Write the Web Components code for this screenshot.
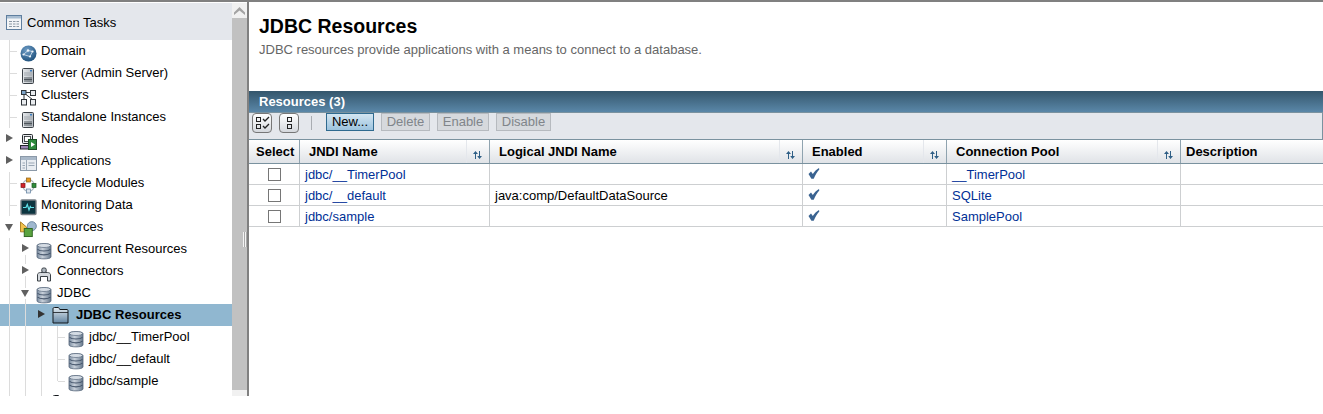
<!DOCTYPE html>
<html>
<head>
<meta charset="utf-8">
<title>JDBC Resources</title>
<style>
    html, body { margin: 0; background: #fff; font-family: "Liberation Sans", Arial, sans-serif; }
</style>
</head>
<body>
<console-shell>
    <nav-tree slot="nav">
        <tree-node cells="t" icon="domain">Domain</tree-node>
        <tree-node cells="t" icon="server">server (Admin Server)</tree-node>
        <tree-node cells="t" icon="cluster">Clusters</tree-node>
        <tree-node cells="t" icon="server">Standalone Instances</tree-node>
        <tree-node cells="r" icon="nodes">Nodes</tree-node>
        <tree-node cells="r" icon="apps">Applications</tree-node>
        <tree-node cells="t" icon="lifecycle">Lifecycle Modules</tree-node>
        <tree-node cells="t" icon="monitor">Monitoring Data</tree-node>
        <tree-node cells="d" icon="resources">Resources</tree-node>
        <tree-node cells="l B" icon="db">Concurrent Resources</tree-node>
        <tree-node cells="l R" icon="connector">Connectors</tree-node>
        <tree-node cells="l D" icon="db">JDBC</tree-node>
        <tree-node cells="l l r" icon="folder" selected>JDBC Resources</tree-node>
        <tree-node cells="l l l t" icon="db">jdbc/__TimerPool</tree-node>
        <tree-node cells="l l l t" icon="db">jdbc/__default</tree-node>
        <tree-node cells="l l l e" icon="db">jdbc/sample</tree-node>
        <tree-node cells="l l l" icon="folder"></tree-node>
    </nav-tree>
    <page-title slot="main" heading="JDBC Resources">JDBC resources provide applications with a means to connect to a database.</page-title>
    <data-table slot="main" heading="Resources (3)">
        <table-row>
            <check-box></check-box>
            <a slot="jndi">jdbc/__TimerPool</a>
            <a slot="pool">__TimerPool</a>
        </table-row>
        <table-row>
            <check-box></check-box>
            <a slot="jndi">jdbc/__default</a>
            <span slot="logical">java:comp/DefaultDataSource</span>
            <a slot="pool">SQLite</a>
        </table-row>
        <table-row>
            <check-box></check-box>
            <a slot="jndi">jdbc/sample</a>
            <a slot="pool">SamplePool</a>
        </table-row>
    </data-table>
</console-shell>

<script>
const dbIcon = `<svg width="16" height="18" viewBox="0 0 16 18">
    <defs><linearGradient id="dbg" x1="0" x2="1" y1="0" y2="0"><stop offset="0" stop-color="#7a8ca0"/><stop offset=".4" stop-color="#c8d0da"/><stop offset="1" stop-color="#66788c"/></linearGradient></defs>
    <path d="M1 3.500C1 1 15 1 15 3.500V15C15 17.500 1 17.500 1 15Z" fill="url(#dbg)" stroke="#56667a" stroke-width=".8"/>
    <ellipse cx="8" cy="3.500" rx="6.500" ry="2" fill="#d5dce4" stroke="#5c6c80" stroke-width=".7"/>
    <path d="M1.500 7.400C4 9.600 12 9.600 14.500 7.400M1.500 11.200C4 13.400 12 13.400 14.500 11.200" fill="none" stroke="#44546a" stroke-width="1.100"/>
</svg>`;
const serverIcon = `<svg width="16" height="16" viewBox="0 0 16 16">
    <defs><linearGradient id="sg" x1="0" x2="1" y1="0" y2="0"><stop offset="0" stop-color="#e6e9ec"/><stop offset="1" stop-color="#b3b9bf"/></linearGradient></defs>
    <rect x="2.500" y=".5" width="11" height="15" rx="1" fill="url(#sg)" stroke="#3c4248"/>
    <rect x="10" y="2" width="2" height="1.500" fill="#3a7dc0"/>
    <path d="M4 5H12M4 7H12" stroke="#a0a6ac"/>
    <path d="M4 10H12M4 11.500H12M4 13H12" stroke="#4d545b"/>
</svg>`;
const icons = {
    domain: `<svg width="17" height="17" viewBox="0 0 17 17">
        <defs><radialGradient id="gl" cx=".4" cy=".3" r=".8"><stop offset="0" stop-color="#6f9dc6"/><stop offset="1" stop-color="#174a76"/></radialGradient></defs>
        <circle cx="8.500" cy="8.500" r="8" fill="url(#gl)"/>
        <path d="M3.500 9.500L8 5.500L12.500 6.500L10 11.500Z" fill="none" stroke="#d8e6f1" stroke-width=".8"/>
        <circle cx="8" cy="5.500" r="1.200" fill="#eef4f9"/><circle cx="12.500" cy="6.500" r="1.100" fill="#eef4f9"/><circle cx="3.500" cy="9.500" r="1.100" fill="#eef4f9"/><circle cx="10" cy="11.500" r="1.100" fill="#eef4f9"/>
    </svg>`,
    server: serverIcon,
    cluster: `<svg width="17" height="17" viewBox="0 0 17 17" fill="#e9ecef" stroke="#2f3439">
        <rect x="1.500" y="1.500" width="4.500" height="4" fill="#7da4c8"/><rect x="10.500" y="1.500" width="5" height="5"/>
        <rect x="1.500" y="10.500" width="5" height="5.500"/><rect x="10.500" y="10.500" width="5" height="5.500"/>
        <path d="M6 3.500H10.500M4 5.500V10.500M6 5.500L12.500 10.500" fill="none"/>
    </svg>`,
    nodes: `<svg width="17" height="17" viewBox="0 0 17 17">
        <rect x="2.500" y="1.500" width="10" height="9" rx="1" fill="#e6e9ec" stroke="#24282c"/>
        <rect x="4.500" y="3.500" width="6" height="5" fill="#fff" stroke="#24282c" stroke-width=".8"/>
        <rect x=".5" y="12.500" width="9" height="3.500" fill="#9b86b5" stroke="#24282c"/>
        <rect x="8.500" y="6.500" width="8" height="10" fill="#2c8a3c" stroke="#1c4d25"/>
        <path d="M11 9L15 11.500L11 14Z" fill="#fff"/>
    </svg>`,
    apps: `<svg width="17" height="16" viewBox="0 0 17 16">
        <rect x=".5" y=".5" width="16" height="14" fill="#e9edf2" stroke="#8b99a8"/>
        <rect x="1" y="1" width="15" height="3" fill="#a9b8c8"/>
        <path d="M6.500 4V14M2.500 7H5M2.500 9.500H5M2.500 12H5M8.500 7H14.500M8.500 9.500H14.500" stroke="#9aa7b5"/>
    </svg>`,
    lifecycle: `<svg width="17" height="17" viewBox="0 0 17 17">
        <circle cx="8.500" cy="8.500" r="5.800" fill="none" stroke="#a9b3bd" stroke-width="1.200"/>
        <rect x="6.500" y="1" width="4" height="4" fill="#e79a21" stroke="#8d5e12" stroke-width=".7"/>
        <rect x="1" y="6.500" width="4" height="4" fill="#d3232a" stroke="#7c1418" stroke-width=".7"/>
        <rect x="12" y="6.500" width="4" height="4" fill="#2f8c3a" stroke="#1b5322" stroke-width=".7"/>
        <rect x="6.500" y="12" width="4" height="4" fill="#dfe6ee" stroke="#5f7f9f" stroke-width=".7"/>
    </svg>`,
    monitor: `<svg width="17" height="17" viewBox="0 0 17 17">
        <rect x="1" y="1" width="15" height="14.500" rx="1" fill="#0d3540" stroke="#7a8086" stroke-width="1.400"/>
        <path d="M3 8.500H6L7.300 5.500L9 11L10.300 7.500L11 8.500H14" fill="none" stroke="#5fe0e8" stroke-width="1.200"/>
    </svg>`,
    resources: `<svg width="18" height="18" viewBox="0 0 18 18">
        <path d="M.5 1.500L7 7V12H.5Z" fill="#f1c24c" stroke="#a87a1e"/>
        <circle cx="12.500" cy="6" r="4.800" fill="#9fb8cf" stroke="#6c87a0"/>
        <rect x="4.500" y="8.500" width="8.500" height="8.500" fill="#5aa33f" stroke="#2d6420"/>
    </svg>`,
    db: dbIcon,
    connector: `<svg width="16" height="16" viewBox="0 0 16 16">
        <path d="M1.500 15V8.500C1.500 7.500 3 6.500 4.500 6.500H11.500C13 6.500 14.500 7.500 14.500 8.500V15H11.500V10.500H4.500V15Z" fill="#d6dade" stroke="#3a4046"/>
        <rect x="5.800" y="2" width="4.400" height="4.500" rx="1.500" fill="#aeb6be" stroke="#3a4046"/>
    </svg>`,
    folder: `<svg width="17" height="19" viewBox="0 0 17 19">
        <defs><linearGradient id="fg" x1="0" x2="0" y1="0" y2="1"><stop offset="0" stop-color="#e3ebf1"/><stop offset="1" stop-color="#6385a2"/></linearGradient></defs>
        <path d="M1 16V2C1 1 1.500 .5 2.500 .5H6C7 .5 7.300 1.500 7.800 2.500H15C15.700 2.500 16 3 16 3.500V16Z" fill="url(#fg)" stroke="#14181c"/>
        <path d="M1 5.500H16" stroke="#14181c" stroke-width=".8"/>
    </svg>`
};

// tree lines and arrows, one 16px cell per level
const cellStyles = {
    l: 'line', t: 'line tick', e: 'elbow tick', r: 'arrow', d: 'arrow down',
    R: 'line arrow', D: 'line arrow down', B: 'below arrow'
};

const treeTemplate = document.createElement('template');
treeTemplate.innerHTML = `
    <style>
        :host { display: flex; height: 22px; font-size: 13px; color: #000; white-space: nowrap; background: #fff; }
        :host([selected]) { background: #90b7d0; font-weight: bold; }
        #cells { display: flex; }
        .cell { width: 16px; height: 22px; position: relative; }
        .line::before, .elbow::before { content: ''; position: absolute; left: 9px; top: 0; bottom: 0; width: 1px; background: #dcdcdc; }
        .elbow::before { bottom: 11px; }
        .tick::after { content: ''; position: absolute; left: 10px; width: 7px; top: 11px; height: 1px; background: #dcdcdc; }
        .below::before { content: ''; position: absolute; left: 9px; top: 17px; bottom: 0; width: 1px; background: #dcdcdc; }
        .arrow i { position: absolute; left: 6px; top: 6px; width: 0; height: 0; box-shadow: 0 0 0 2px #fff;
            border-left: 7px solid #606060; border-top: 4px solid transparent; border-bottom: 4px solid transparent; background: #fff; }
        .arrow.down i { left: 5px; top: 8px; border-top: 7px solid #606060; border-bottom: 0;
            border-left: 4px solid transparent; border-right: 4px solid transparent; }
        :host([selected]) .arrow i { background: transparent; box-shadow: none; border-left-color: #333; }
        #icon { margin-left: 4px; width: 17px; height: 22px; display: flex; align-items: flex-end; flex: none; }
        #label { padding-left: 4px; line-height: 21px; }
        :host([selected]) #label { padding-left: 7px; }
    </style>
    <div id="cells"></div>
    <div id="icon"></div>
    <div id="label"><slot></slot></div>
`;
class TreeNode extends HTMLElement {
    constructor(){
        super();
        this.attachShadow({mode: 'open'});
        this.shadowRoot.appendChild(treeTemplate.content.cloneNode(true));
        const cells = this.shadowRoot.querySelector('#cells');
        (this.getAttribute('cells') || '').split(' ').forEach(c => {
            const cell = document.createElement('div');
            cell.className = 'cell ' + cellStyles[c];
            if(cellStyles[c].includes('arrow')) cell.appendChild(document.createElement('i'));
            cells.appendChild(cell);
        });
        this.shadowRoot.querySelector('#icon').innerHTML = icons[this.getAttribute('icon')];
    }
}
customElements.define('tree-node', TreeNode);

const navTemplate = document.createElement('template');
navTemplate.innerHTML = `
    <style>
        :host { display: flex; width: 232px; height: 393px; flex-direction: column; overflow: hidden; flex: none; }
        header { display: flex; align-items: center; height: 37px; box-sizing: border-box; padding: 1px 0 0 6px; flex: none; background: #e4e7ec; font-size: 13px; color: #000; gap: 5px; }
    </style>
    <header>
        <svg width="16" height="15" viewBox="0 0 16 15">
            <rect x=".5" y=".5" width="15" height="14" fill="#f3f5f7" stroke="#5f7f9f"/>
            <rect x="1" y="1" width="14" height="2.500" fill="#a8bdd1"/>
            <path d="M3 6.500H6M7 6.500H9.500M10.500 6.500H13M3 9H6M7 9H9.500M10.500 9H13M3 11.500H6M7 11.500H9.500M10.500 11.500H13" stroke="#8c98a4"/>
        </svg>
        Common Tasks
    </header>
    <slot></slot>
`;
class NavTree extends HTMLElement {
    constructor(){
        super();
        this.attachShadow({mode: 'open'});
        this.shadowRoot.appendChild(navTemplate.content.cloneNode(true));
    }
}
customElements.define('nav-tree', NavTree);

const shellTemplate = document.createElement('template');
shellTemplate.innerHTML = `
    <style>
        :host { display: flex; height: 394px; border-top: 2px solid #808080; }
        #bar { width: 15px; flex: none; display: flex; flex-direction: column; background: #f1f1f1; margin-top: 1px; }
        #up { height: 15px; display: flex; align-items: center; justify-content: center; }
        #thumb { height: 372px; background: #c1c1c1; }
        #split { width: 2px; flex: none; background: #808080; position: relative; }
        #grip { position: absolute; left: -4px; top: 230px; width: 4px; height: 15px;
            background: repeating-linear-gradient(90deg, #f4f4f4 0 1px, #a9a9a9 1px 2px); }
        #main { flex: 1; min-width: 0; display: flex; flex-direction: column; }
        #navwrap { display: flex; padding-top: 1px; flex: none; }
    </style>
    <div id="navwrap"><slot name="nav"></slot></div>
    <div id="bar">
        <div id="up"><svg width="11" height="8" viewBox="0 0 11 8"><path d="M5.500 0L11 5.500V8L5.500 3.500L0 8V5.500Z" fill="#a3a3a3"/></svg></div>
        <div id="thumb"></div>
    </div>
    <div id="split"><div id="grip"></div></div>
    <div id="main"><slot name="main"></slot></div>
`;
class ConsoleShell extends HTMLElement {
    constructor(){
        super();
        this.attachShadow({mode: 'open'});
        this.shadowRoot.appendChild(shellTemplate.content.cloneNode(true));
    }
}
customElements.define('console-shell', ConsoleShell);

const titleTemplate = document.createElement('template');
titleTemplate.innerHTML = `
    <style>
        :host { display: block; height: 89px; padding-left: 10px; box-sizing: border-box; }
        h1 { margin: 0; padding-top: 13px; font-size: 19.5px; line-height: 22px; color: #000; }
        p { margin: 5px 0 0; font-size: 13px; line-height: 16px; color: #666; }
    </style>
    <h1></h1>
    <p><slot></slot></p>
`;
class PageTitle extends HTMLElement {
    constructor(){
        super();
        this.attachShadow({mode: 'open'});
        this.shadowRoot.appendChild(titleTemplate.content.cloneNode(true));
        this.shadowRoot.querySelector('h1').innerText = this.getAttribute('heading');
    }
}
customElements.define('page-title', PageTitle);

const checkTemplate = document.createElement('template');
checkTemplate.innerHTML = `
    <style>
        :host { display: block; width: 13px; height: 13px; box-sizing: border-box; border: 1px solid #767676; background: #fff; }
    </style>
`;
class CheckBox extends HTMLElement {
    constructor(){
        super();
        this.attachShadow({mode: 'open'});
        this.shadowRoot.appendChild(checkTemplate.content.cloneNode(true));
    }
}
customElements.define('check-box', CheckBox);

const COLS = '51px 190px 313px 144px 234px 142px';

const rowTemplate = document.createElement('template');
rowTemplate.innerHTML = `
    <style>
        :host { display: grid; grid-template-columns: ${COLS}; height: 21px; box-sizing: border-box; border-bottom: 1px solid #cdcfd1; font-size: 13px; color: #000; }
        .c { border-right: 1px solid #cdcfd1; display: flex; align-items: center; padding: 1px 0 0 5px; min-width: 0; white-space: nowrap; line-height: 19px; box-sizing: border-box; }
        .c:last-child { border-right: 0; }
        .sel { padding: 0 0 0 19px; }
        ::slotted(a) { color: #003096; }
        svg { margin-top: -2px; }
    </style>
    <div class="c sel"><slot></slot></div>
    <div class="c"><slot name="jndi"></slot></div>
    <div class="c"><slot name="logical"></slot></div>
    <div class="c"><svg width="12" height="11" viewBox="0 0 12 11"><path d="M0.5 6L3 3.600L4.800 6C6.500 3.400 8.500 1.400 11 0L11.300 1.500C9 4 7.200 7.500 5.700 10.800H3.400Z" fill="#3a6391"/></svg></div>
    <div class="c"><slot name="pool"></slot></div>
    <div class="c"></div>
`;
class TableRow extends HTMLElement {
    constructor(){
        super();
        this.attachShadow({mode: 'open'});
        this.shadowRoot.appendChild(rowTemplate.content.cloneNode(true));
    }
}
customElements.define('table-row', TableRow);

const sortIcon = `<div class="sort"><svg width="11" height="8" viewBox="0 0 11 8"><path d="M3 8V3H1L3.500 0L6 3H4V8Z" fill="#2f5f86"/><path d="M7 0V5H5.200L7.500 8L10 5H8V0Z" fill="#2f5f86"/></svg></div>`;

const tableTemplate = document.createElement('template');
tableTemplate.innerHTML = `
    <style>
        :host { display: block; font-size: 13px; color: #000; }
        #title { height: 21px; padding-left: 10px; color: #fff; font-weight: bold; font-size: 13px; line-height: 21px; background: linear-gradient(#34566c, #5a87a8); }
        #tools { height: 27px; box-sizing: border-box; display: flex; align-items: flex-start; padding: 0 0 0 3px; background: #e4e7ec; border-right: 1px solid #7a929f; border-top: 1px solid #7a929f; }
        .ico { width: 20px; height: 20px; box-sizing: border-box; border: 1px solid #777; border-radius: 4px; background: linear-gradient(#fff, #d5d8dd); display: flex; align-items: center; justify-content: center; margin-right: 7px; }
        .sep { width: 1px; height: 14px; background: #a9adb2; margin: 3px 14px 0 5px; }
        button { font: inherit; font-size: 13px; height: 18px; padding: 0 0 2px; margin: 0 7px 0 0; box-sizing: border-box; border: 1px solid #b6babf; background: #d6d9dd; color: #80858a; border-radius: 0; }
        button.on { background: linear-gradient(#d3e5f1, #9cc3de); color: #000; border-color: #2f6a8f; }
        #head { display: grid; grid-template-columns: ${COLS}; height: 25px; box-sizing: border-box; border-top: 1px solid #7a929f; border-bottom: 1px solid #7a929f; background: linear-gradient(#fff, #e0e3e7); font-weight: bold; font-size: 13px; }
        .h { border-right: 1px solid #8fa3af; display: flex; align-items: stretch; min-width: 0; }
        .h:last-child { border-right: 0; }
        .h span { flex: 1; padding-left: 9px; line-height: 23px; white-space: nowrap; }
        .h:first-child span { padding-left: 7px; }
        .h:last-child span { padding-left: 5px; }
        .sort { width: 23px; border-left: 1px solid #e4e7ec; display: flex; align-items: center; justify-content: center; padding: 7px 1px 0 0; box-sizing: border-box; flex: none; }
    </style>
    <div id="title"></div>
    <div id="tools">
        <div class="ico"><svg width="15" height="14" viewBox="0 0 15 14" fill="none" stroke="#222"><rect x="1.500" y="1.500" width="4" height="4"/><rect x="1.500" y="8.500" width="4" height="4"/><path d="M8 3L10 5L14 1M8 10L10 12L14 8" stroke-width="1.300"/></svg></div>
        <div class="ico"><svg width="9" height="14" viewBox="0 0 9 14" fill="none" stroke="#222"><rect x="2.500" y="1.500" width="4" height="4"/><rect x="2.500" y="8.500" width="4" height="4"/></svg></div>
        <div class="sep"></div>
        <button class="on" style="width:48px">New...</button>
        <button style="width:49px">Delete</button>
        <button style="width:52px">Enable</button>
        <button style="width:55px">Disable</button>
    </div>
    <div id="head">
        <div class="h"><span>Select</span></div>
        <div class="h"><span>JNDI Name</span>${sortIcon}</div>
        <div class="h"><span>Logical JNDI Name</span>${sortIcon}</div>
        <div class="h"><span>Enabled</span>${sortIcon}</div>
        <div class="h"><span>Connection Pool</span>${sortIcon}</div>
        <div class="h"><span>Description</span></div>
    </div>
    <slot></slot>
`;
class DataTable extends HTMLElement {
    constructor(){
        super();
        this.attachShadow({mode: 'open'});
        this.shadowRoot.appendChild(tableTemplate.content.cloneNode(true));
        this.shadowRoot.querySelector('#title').innerText = this.getAttribute('heading');
    }
}
customElements.define('data-table', DataTable);
</script>
</body>
</html>
